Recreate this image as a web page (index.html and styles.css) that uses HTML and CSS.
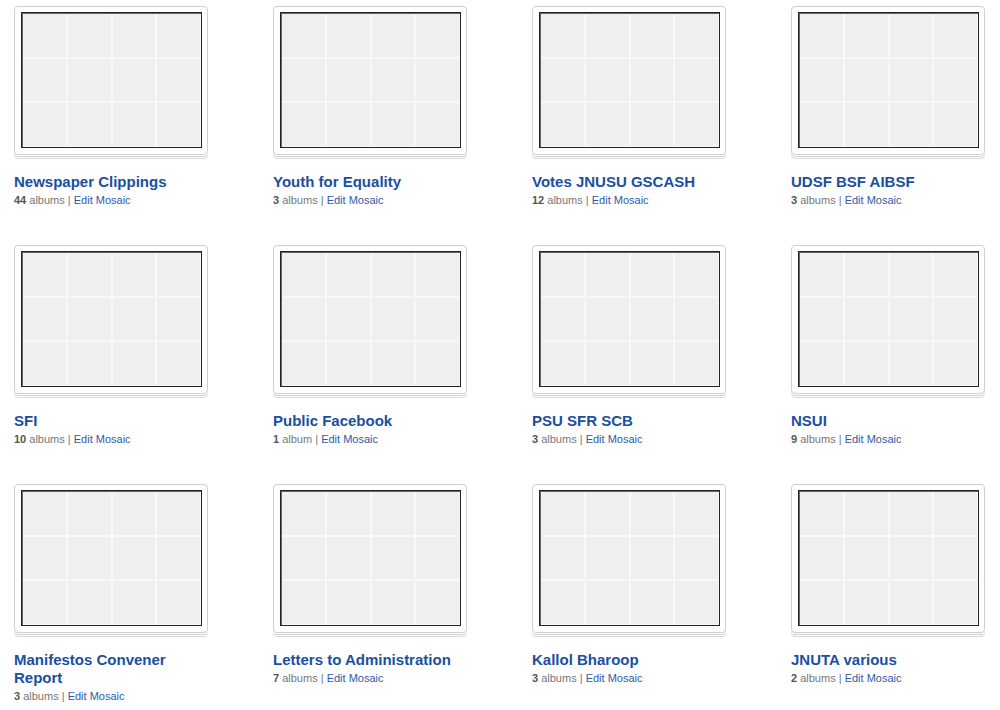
FILE: index.html
```html
<!DOCTYPE html>
<html lang="en">
    <head>
        <meta charset="UTF-8" />
        <title>Mosaics</title>
        <link rel="stylesheet" href="styles.css">
    </head>
    <body>
        <main class="albums" id="albums"></main>
        <script>
            // mosaic collections
            const items = [
                ["Newspaper Clippings", 44],
                ["Youth for Equality", 3],
                ["Votes JNUSU GSCASH", 12],
                ["UDSF BSF AIBSF", 3],
                ["SFI", 10],
                ["Public Facebook", 1],
                ["PSU SFR SCB", 3],
                ["NSUI", 9],
                ["Manifestos Convener Report", 3],
                ["Letters to Administration", 7],
                ["Kallol Bharoop", 3],
                ["JNUTA various", 2],
            ];

            const root = document.getElementById("albums");
            items.forEach(([name, count]) => {
                const cells = "<span></span>".repeat(12);
                const el = document.createElement("div");
                el.className = "album";
                el.innerHTML =
                    '<a class="frame" href="#"><div class="mosaic">' + cells + "</div></a>" +
                    '<a class="title" href="#">' + name + "</a>" +
                    '<div class="meta"><b>' + count + "</b> " +
                    (count === 1 ? "album" : "albums") +
                    ' | <a href="#">Edit Mosaic</a></div>';
                root.appendChild(el);
            });
        </script>
    </body>
</html>
```

FILE: styles.css
```css
html,
body {
    margin: 0;
    background: #fff;
    font-family: "Liberation Sans", Arial, sans-serif;
    color: #666;
}
.albums {
    display: grid;
    grid-template-columns: repeat(4, 194px);
    grid-auto-rows: 239px;
    column-gap: 65px;
    padding: 6px 0 0 14px;
}
.album {
    display: flex;
    flex-direction: column;
    align-items: flex-start;
}
.frame {
    display: block;
    width: 194px;
    box-sizing: border-box;
    padding: 5px 5px 6px 6px;
    background: #fff;
    border: 1px solid #cfcfcf;
    border-radius: 4px;
    box-shadow: 0 1px 0 #fff, 0 2px 0 #d2d2d2, 0 3px 0 #fff,
        0 4px 0 #dadada;
}
.mosaic {
    height: 136px;
    box-sizing: border-box;
    border: 1px solid #222;
    box-shadow: inset 1px 1px 0 #666;
    background: #f8f8f8;
    padding: 1px;
    display: grid;
    grid-template-columns: repeat(4, 1fr);
    grid-template-rows: repeat(3, 1fr);
    gap: 2px;
}
.mosaic span {
    background: #efefef;
}
.title {
    margin-top: 18px;
    font-size: 15px;
    line-height: 18px;
    font-weight: 700;
    color: #1b4f9e;
    text-decoration: none;
}
.meta {
    margin-top: 2px;
    font-size: 11px;
    line-height: 15px;
    color: #777;
}
.meta b {
    color: #555;
}
.meta a {
    color: #2d5ba8;
    text-decoration: none;
}
```
